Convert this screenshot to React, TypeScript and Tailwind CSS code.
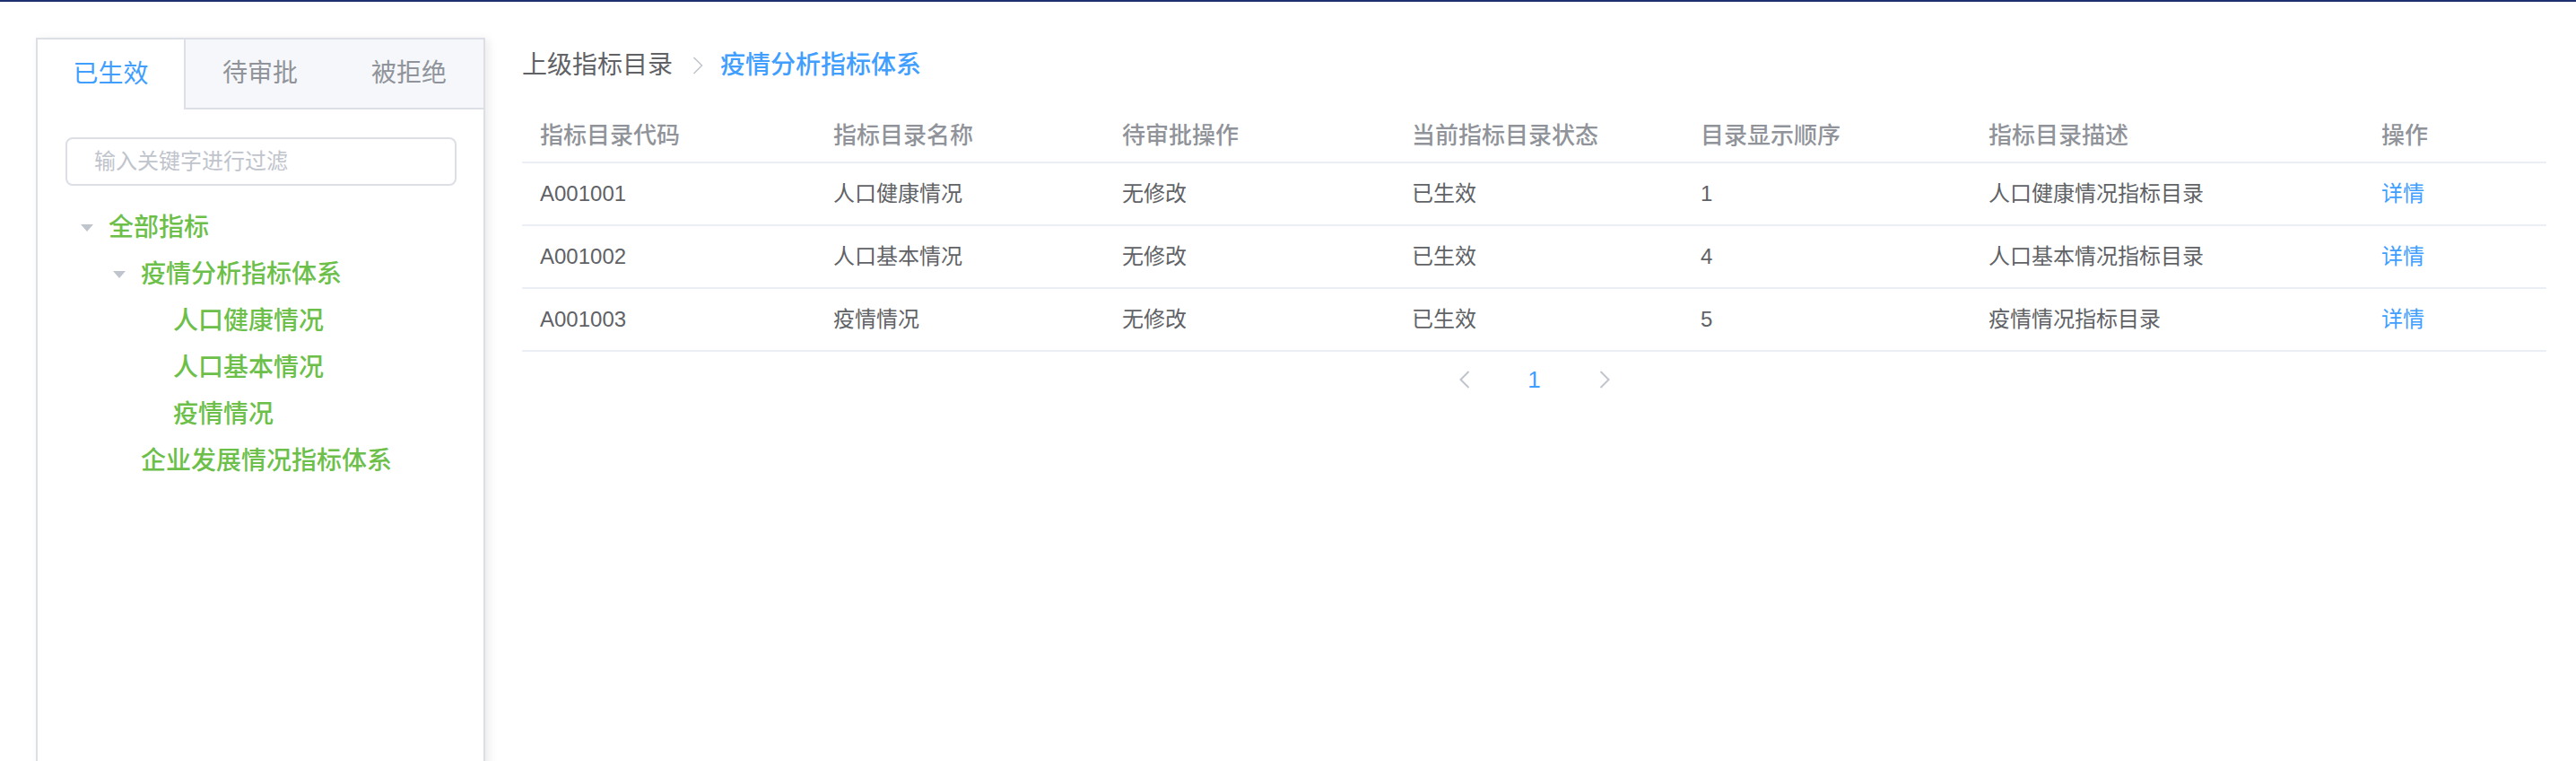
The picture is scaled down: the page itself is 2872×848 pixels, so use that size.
import React from "react";

const FONT = "font-['Liberation_Sans','Noto_Sans_CJK_SC',sans-serif]";

const rows = [
  { code: "A001001", name: "人口健康情况", op: "无修改", status: "已生效", order: "1", desc: "人口健康情况指标目录" },
  { code: "A001002", name: "人口基本情况", op: "无修改", status: "已生效", order: "4", desc: "人口基本情况指标目录" },
  { code: "A001003", name: "疫情情况", op: "无修改", status: "已生效", order: "5", desc: "疫情情况指标目录" },
];

const headers = ["指标目录代码", "指标目录名称", "待审批操作", "当前指标目录状态", "目录显示顺序", "指标目录描述", "操作"];

const tree = [
  { label: "全部指标", level: 0, open: true },
  { label: "疫情分析指标体系", level: 1, open: true },
  { label: "人口健康情况", level: 2 },
  { label: "人口基本情况", level: 2 },
  { label: "疫情情况", level: 2 },
  { label: "企业发展情况指标体系", level: 1 },
];

const Caret = () => (
  <svg width="14" height="8" viewBox="0 0 14 8">
    <polygon points="0,0 14,0 7,8" fill="#c0c4cc" />
  </svg>
);

const Chevron = ({ dir, w = 2 }: { dir: "left" | "right"; w?: number }) => (
  <svg width="12" height="20" viewBox="0 0 12 20" fill="none">
    <polyline
      points={dir === "right" ? "1.5,1 10.5,10 1.5,19" : "10.5,1 1.5,10 10.5,19"}
      stroke="#c0c4cc"
      strokeWidth={w}
    />
  </svg>
);

const Sidebar: React.FC = () => (
  <div className="w-[501px] h-[900px] shrink-0 border-2 border-[#dcdfe6] bg-white shadow-[4px_2px_10px_rgba(0,0,0,0.08)] flex flex-col">
    {/* tabs */}
    <div className="flex h-[78px] bg-[#f5f7fa] text-[28px]">
      <div className="w-[165px] bg-white border-r-2 border-[#dcdfe6] flex items-center justify-center text-[#409eff]">
        已生效
      </div>
      <div className="w-[166px] border-b-2 border-[#dcdfe6] flex items-center justify-center text-[#909399]">
        待审批
      </div>
      <div className="flex-1 border-b-2 border-[#dcdfe6] flex items-center justify-center text-[#909399]">
        被拒绝
      </div>
    </div>

    <div className="pt-[31px] pl-[31px] pr-[30px]">
      <div className="h-[54px] border-2 border-[#dcdfe6] rounded-[8px] flex items-center pl-[30px] text-[24px] text-[#c0c4cc]">
        输入关键字进行过滤
      </div>

      <div className="mt-[21px] flex flex-col">
        {tree.map((n, i) => (
          <div key={i} className="h-[52px] flex items-center" style={{ paddingLeft: n.level * 36 }}>
            <div className="w-[48px] flex items-center justify-center">{n.open && <Caret />}</div>
            <span className="text-[28px] font-medium text-[#6cc04a]">{n.label}</span>
          </div>
        ))}
      </div>
    </div>
  </div>
);

const grid = "grid grid-cols-[327px_322px_323px_322px_321px_438px_1fr]";

export default function App() {
  return (
    <div className={`w-[2872px] h-[848px] overflow-hidden bg-white border-t-2 border-[#1e3070] flex items-start gap-[41px] pl-[40px] pt-[40px] ${FONT}`}>
      <Sidebar />

      <div className="w-[2257px] pt-[17px]">
        {/* breadcrumb */}
        <div className="flex items-center h-[28px] text-[28px] leading-[28px]">
          <span className="text-[#606266]">上级指标目录</span>
          <span className="ml-[22px] mr-[19px] flex items-center">
            <Chevron dir="right" w={1.5} />
          </span>
          <span className="text-[#409eff] font-medium">疫情分析指标体系</span>
        </div>

        {/* table */}
        <div className="mt-[35px]">
          <div className={`${grid} h-[60px] items-center border-b-2 border-[#ebeef5] text-[26px] font-medium text-[#909399]`}>
            {headers.map((h) => (
              <div key={h} className="px-[20px]">{h}</div>
            ))}
          </div>
          {rows.map((r) => (
            <div key={r.code} className={`${grid} h-[70px] items-center border-b-2 border-[#ebeef5] text-[24px] text-[#606266]`}>
              <div className="px-[20px]">{r.code}</div>
              <div className="px-[20px]">{r.name}</div>
              <div className="px-[20px]">{r.op}</div>
              <div className="px-[20px]">{r.status}</div>
              <div className="px-[20px]">{r.order}</div>
              <div className="px-[20px]">{r.desc}</div>
              <div className="px-[20px] text-[#409eff]">详情</div>
            </div>
          ))}
        </div>

        {/* pagination */}
        <div className="h-[62px] flex items-center justify-center">
          <div className="w-[78px] flex justify-center"><Chevron dir="left" /></div>
          <div className="w-[78px] text-center text-[26px] font-medium text-[#409eff]">1</div>
          <div className="w-[78px] flex justify-center"><Chevron dir="right" /></div>
        </div>
      </div>
    </div>
  );
}
